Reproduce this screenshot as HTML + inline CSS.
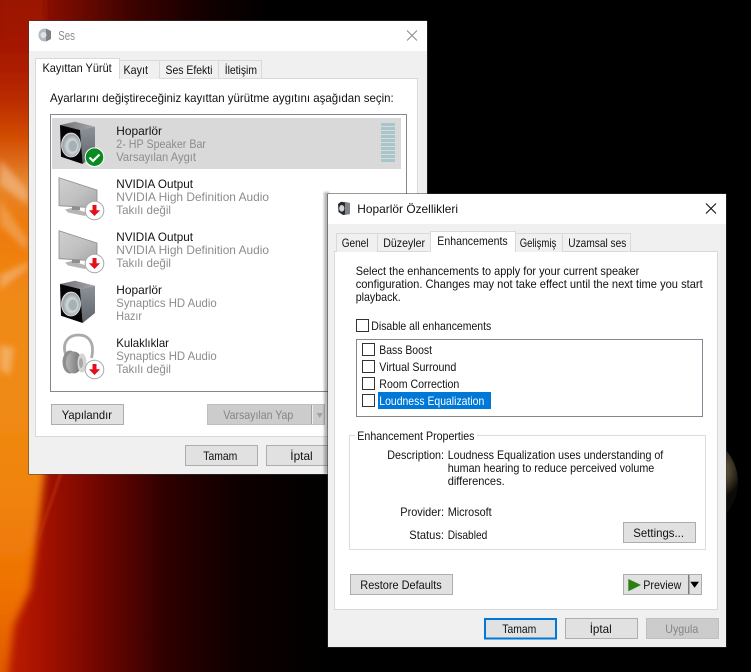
<!DOCTYPE html>
<html><head><meta charset="utf-8"><title>Ses</title>
<style>
html,body{margin:0;padding:0;background:#000;overflow:hidden}
svg{display:block}
text{font-family:"Liberation Sans",sans-serif;font-size:12px;fill:#000;white-space:pre}
.g{fill:#8c8c8c}
.d{fill:#858585}
.t{fill:#111}
</style></head><body>
<svg xmlns="http://www.w3.org/2000/svg" width="751" height="672" viewBox="0 0 751 672">
<defs>
<linearGradient id="bgT" x1="0" y1="0" x2="1" y2="0">
<stop offset="0" stop-color="#a51500"/><stop offset=".12" stop-color="#7a0b00"/><stop offset=".25" stop-color="#3a0200"/><stop offset=".38" stop-color="#120000"/><stop offset=".5" stop-color="#000"/>
</linearGradient>
<linearGradient id="fire" gradientUnits="userSpaceOnUse" x1="0" y1="0" x2="0" y2="672">
<stop offset="0" stop-color="#9a1400"/><stop offset=".09" stop-color="#a81a00"/><stop offset=".15" stop-color="#bb2c00"/><stop offset=".21" stop-color="#d45005"/><stop offset=".27" stop-color="#e6852e"/><stop offset=".34" stop-color="#ee7a08"/><stop offset=".45" stop-color="#f08a18"/><stop offset=".6" stop-color="#f08a15"/><stop offset=".75" stop-color="#f08208"/><stop offset=".89" stop-color="#ee7005"/><stop offset="1" stop-color="#e05a05"/>
</linearGradient>
<linearGradient id="botG" x1="0" y1="0" x2="1" y2="0">
<stop offset="0" stop-color="#c22000"/><stop offset=".12" stop-color="#a81200"/><stop offset=".3" stop-color="#700600"/><stop offset=".5" stop-color="#2e0000"/><stop offset=".72" stop-color="#0e0000"/><stop offset="1" stop-color="#000"/>
</linearGradient>
<radialGradient id="planet" gradientUnits="userSpaceOnUse" cx="712" cy="470" r="30"><stop offset="0" stop-color="#7a6a50"/><stop offset=".5" stop-color="#5c4f3a"/><stop offset="1" stop-color="#0c0a06"/></radialGradient>
<filter id="b6" x="-50%" y="-50%" width="200%" height="200%"><feGaussianBlur stdDeviation="4"/></filter>
<filter id="b3" x="-50%" y="-50%" width="200%" height="200%"><feGaussianBlur stdDeviation="3"/></filter>
<filter id="b1" x="-50%" y="-50%" width="200%" height="200%"><feGaussianBlur stdDeviation="1"/></filter>
<linearGradient id="side" x1="0" y1="0" x2="0" y2="1"><stop offset="0" stop-color="#8d9198"/><stop offset="1" stop-color="#5f636a"/></linearGradient>
<linearGradient id="top" x1="0" y1="0" x2="1" y2="0"><stop offset="0" stop-color="#6f7074"/><stop offset="1" stop-color="#a5a6a9"/></linearGradient>
<radialGradient id="cone" cx=".55" cy=".55" r=".6"><stop offset="0" stop-color="#8c979c"/><stop offset=".45" stop-color="#cfd6da"/><stop offset=".8" stop-color="#99a2a8"/><stop offset="1" stop-color="#e8ecee"/></radialGradient>
<linearGradient id="scr" x1="0" y1="0" x2="1" y2="1"><stop offset="0" stop-color="#d0d0d0"/><stop offset=".55" stop-color="#c0c0c0"/><stop offset="1" stop-color="#a6a6a6"/></linearGradient>
<linearGradient id="cup" x1="0" y1="0" x2="1" y2="0"><stop offset="0" stop-color="#b5b5b5"/><stop offset=".6" stop-color="#8a8a8a"/><stop offset="1" stop-color="#757575"/></linearGradient>
<g id="spk">
<path d="M60 125 75 121.7 95 126.7 80 130Z" fill="url(#top)"/>
<path d="M80 130 95 126.7 95 154 82.7 164Z" fill="url(#side)"/>
<path d="M60 125 80 130 82.7 164 61 156.700Z" fill="#050505"/>
<ellipse cx="71" cy="145" rx="9.500" ry="12" fill="url(#cone)" stroke="#e4e8ea" stroke-width=".8"/>
<ellipse cx="73" cy="146" rx="4" ry="5.500" fill="#a6b0b5"/>
</g>
<g id="mon">
<path d="M65 209.500 72 208 88 213 85 216 68 212.500Z" fill="#b5b5b5"/>
<path d="M72 205h8v5h-8z" fill="#8f8f8f"/>
<path d="M59 177.700 97 190V208L59 205.700Z" fill="url(#scr)" stroke="#8b8b8b" stroke-width=".8"/>
</g>
<g id="red">
<circle cx="94.500" cy="210.500" r="9.300" fill="#fff" stroke="#a8a8a8" stroke-width="1"/>
<path d="M92.500 205h4v5.200h3.600L94.500 216 88.900 210.200h3.600Z" fill="#e2101a"/>
</g>
<g id="hp">
<path d="M65.500 354C62 343 68 335 78.500 335S95 343 91.500 358" fill="none" stroke="#ababab" stroke-width="2.800"/>
<ellipse cx="70" cy="362" rx="7.500" ry="11.500" fill="#8e8e8e"/>
<ellipse cx="74" cy="362.500" rx="8" ry="11" fill="url(#cup)"/>
<ellipse cx="82" cy="363" rx="4.500" ry="9.500" fill="#d4d4d4"/>
<ellipse cx="81" cy="363" rx="2" ry="5" fill="#a8a8a8"/>
</g>
</defs>

<!-- wallpaper -->
<rect width="751" height="672" fill="#000"/>
<rect width="540" height="480" fill="url(#bgT)"/>
<rect x="0" y="470" width="330" height="202" fill="url(#botG)"/>
<path d="M-12-12H45V470L37 540 30 590 14 625 6 690H-12Z" fill="url(#fire)" filter="url(#b6)"/>
<rect x="0" y="0" width="4" height="40" fill="#9a1400" opacity=".5"/>
<g filter="url(#b3)" opacity=".55">
<path d="M0 160 28 190 28 205 0 185Z" fill="#f5c69a"/>
<path d="M0 275 28 262 28 268 0 290Z" fill="#f7c08f"/>
<path d="M0 345 14 348 10 375 0 370Z" fill="#f6c89a"/>
<path d="M0 200 28 240 26 250 0 225Z" fill="#f2b070"/>
</g>
<path d="M62 470 38 540" stroke="#c23a10" stroke-width="3" opacity=".5" filter="url(#b1)"/>
<!-- planet -->
<circle cx="690" cy="482" r="48" fill="url(#planet)"/>

<!-- Window 1 -->
<rect x="28.500" y="20.500" width="399" height="454" fill="#3a3a3a"/>
<rect x="29" y="21" width="398" height="453" fill="#f0f0f0"/>
<rect x="29" y="21" width="398" height="30" fill="#fff"/>
<g opacity=".75">
<ellipse cx="44.500" cy="35" rx="6" ry="6.500" fill="#9ca3a7"/>
<path d="M46 28.500 51 31V39L46 41.500Z" fill="#55585c"/>
<circle cx="43.500" cy="35" r="3" fill="#d8dcde"/>
</g>
<text x="58.300" y="40" class="g" textLength="16.700" lengthAdjust="spacingAndGlyphs" style="font-size:13px">Ses</text>
<path d="M407 30.500 417 40.500M417 30.500 407 40.500" stroke="#8a8a8a" stroke-width="1" fill="none"/>

<rect x="35.500" y="78.500" width="382" height="358" fill="#fff" stroke="#d9d9d9"/>
<path d="M119.500 79V60.500H159.500V79M159.500 60.500H218.500V79M218.500 60.500H261.500V79" fill="#f0f0f0" stroke="#d9d9d9"/>
<path d="M35.500 79V58.500H119.500V79" fill="#fff" stroke="#d9d9d9"/>
<rect x="36" y="77" width="83" height="3" fill="#fff"/>
<text x="42.500" y="72" class="t" textLength="69.200" lengthAdjust="spacingAndGlyphs">Kayıttan Yürüt</text>
<text x="123.500" y="74" class="t" textLength="24.500" lengthAdjust="spacingAndGlyphs">Kayıt</text>
<text x="165.500" y="74" class="t" textLength="47" lengthAdjust="spacingAndGlyphs">Ses Efekti</text>
<text x="224.700" y="74" class="t" textLength="32.300" lengthAdjust="spacingAndGlyphs">İletişim</text>
<text x="50" y="102" class="t" textLength="343.700" lengthAdjust="spacingAndGlyphs">Ayarlarını değiştireceğiniz kayıttan yürütme aygıtını aşağıdan seçin:</text>

<rect x="50.500" y="114.500" width="356" height="277" fill="#fff" stroke="#828790"/>
<rect x="52" y="118" width="349" height="51" fill="#d9d9d9"/>
<g fill="#a9c5cc">
<rect x="381" y="123" width="14" height="3"/><rect x="381" y="127" width="14" height="3"/><rect x="381" y="131" width="14" height="3"/><rect x="381" y="135" width="14" height="3"/><rect x="381" y="139" width="14" height="3"/><rect x="381" y="143" width="14" height="3"/><rect x="381" y="147" width="14" height="3"/><rect x="381" y="151" width="14" height="3"/><rect x="381" y="155" width="14" height="3"/><rect x="381" y="159" width="14" height="3"/>
</g>

<use href="#spk"/>
<circle cx="94.500" cy="157.200" r="9.300" fill="#0a8a22" stroke="#fff" stroke-width="1"/>
<path d="M89.500 157.500 93 161 99.500 154.500" fill="none" stroke="#fff" stroke-width="2.200"/>
<use href="#mon"/><use href="#red"/>
<use href="#mon" y="53"/><use href="#red" y="53"/>
<use href="#spk" y="159"/>
<use href="#hp"/><use href="#red" y="159"/>

<text x="116.300" y="135" class="t" textLength="45.700" lengthAdjust="spacingAndGlyphs">Hoparlör</text>
<text x="116.300" y="148" class="g" textLength="89.700" lengthAdjust="spacingAndGlyphs">2- HP Speaker Bar</text>
<text x="116.300" y="161" class="g" textLength="79.700" lengthAdjust="spacingAndGlyphs">Varsayılan Aygıt</text>
<text x="116.300" y="188" class="t" textLength="76.700" lengthAdjust="spacingAndGlyphs">NVIDIA Output</text>
<text x="116.300" y="201" class="g" textLength="152.700" lengthAdjust="spacingAndGlyphs">NVIDIA High Definition Audio</text>
<text x="116.300" y="214" class="g" textLength="54.700" lengthAdjust="spacingAndGlyphs">Takılı değil</text>
<text x="116.300" y="241" class="t" textLength="76.700" lengthAdjust="spacingAndGlyphs">NVIDIA Output</text>
<text x="116.300" y="254" class="g" textLength="152.700" lengthAdjust="spacingAndGlyphs">NVIDIA High Definition Audio</text>
<text x="116.300" y="267" class="g" textLength="54.700" lengthAdjust="spacingAndGlyphs">Takılı değil</text>
<text x="116.300" y="294" class="t" textLength="45.700" lengthAdjust="spacingAndGlyphs">Hoparlör</text>
<text x="116.300" y="307" class="g" textLength="100.400" lengthAdjust="spacingAndGlyphs">Synaptics HD Audio</text>
<text x="116.300" y="320" class="g" textLength="25.700" lengthAdjust="spacingAndGlyphs">Hazır</text>
<text x="116.300" y="347" class="t" textLength="52.700" lengthAdjust="spacingAndGlyphs">Kulaklıklar</text>
<text x="116.300" y="360" class="g" textLength="100.400" lengthAdjust="spacingAndGlyphs">Synaptics HD Audio</text>
<text x="116.300" y="373" class="g" textLength="54.700" lengthAdjust="spacingAndGlyphs">Takılı değil</text>

<rect x="51.500" y="404.500" width="72" height="20" fill="#e1e1e1" stroke="#adadad"/>
<text x="61.700" y="419" class="t" textLength="50.300" lengthAdjust="spacingAndGlyphs">Yapılandır</text>
<rect x="207.500" y="404.500" width="117" height="20" fill="#cccccc" stroke="#bfbfbf"/>
<text x="223.300" y="419" class="d" textLength="70" lengthAdjust="spacingAndGlyphs">Varsayılan Yap</text>
<rect x="311" y="405" width="1" height="19" fill="#a0a0a0"/>
<rect x="312" y="405" width="1" height="19" fill="#eee"/>
<path d="M316.700 413H322.700L319.700 418Z" fill="#a0a0a0"/>

<rect x="185.500" y="445.500" width="72" height="20" fill="#e1e1e1" stroke="#adadad"/>
<text x="203.300" y="460" class="t" textLength="34" lengthAdjust="spacingAndGlyphs">Tamam</text>
<rect x="266.500" y="445.500" width="72" height="20" fill="#e1e1e1" stroke="#adadad"/>
<text x="290.300" y="460" class="t" textLength="22.400" lengthAdjust="spacingAndGlyphs">İptal</text>

<!-- Window 2 shadow -->
<rect x="324" y="192" width="5" height="282" fill="#000" opacity=".28" filter="url(#b1)"/>
<!-- Window 2 -->
<rect x="327.500" y="193.500" width="399" height="454" fill="#333"/>
<rect x="328" y="194" width="398" height="453" fill="#f0f0f0"/>
<rect x="328" y="194" width="398" height="30" fill="#fff"/>
<path d="M338 204 341 201.800 350 203V214L343 215 338.500 212Z" fill="#2a2a2a"/>
<path d="M345 203H350V214L345 215Z" fill="#808388"/>
<ellipse cx="341.800" cy="208.300" rx="2.600" ry="3.300" fill="#cfd5d8"/>
<text x="357.300" y="213" class="t" textLength="100.700" lengthAdjust="spacingAndGlyphs">Hoparlör Özellikleri</text>
<path d="M706 203.500 716 213.500M716 203.500 706 213.500" stroke="#111" stroke-width="1.100" fill="none"/>

<rect x="334.500" y="251.500" width="383" height="358" fill="#fff" stroke="#d9d9d9"/>
<path d="M336.500 252V233.500H377.500V252M377.500 233.500H430.500V252M515.500 252V233.500H562.500V252M562.500 233.500H630.500V252" fill="#f0f0f0" stroke="#d9d9d9"/>
<path d="M430.500 252V231.500H515.500V252" fill="#fff" stroke="#d9d9d9"/>
<rect x="431" y="250" width="84" height="3" fill="#fff"/>
<text x="341.700" y="247" class="t" textLength="26.800" lengthAdjust="spacingAndGlyphs">Genel</text>
<text x="383.300" y="247" class="t" textLength="41.700" lengthAdjust="spacingAndGlyphs">Düzeyler</text>
<text x="437.300" y="245" class="t" textLength="70.400" lengthAdjust="spacingAndGlyphs">Enhancements</text>
<text x="519.700" y="247" class="t" textLength="36.600" lengthAdjust="spacingAndGlyphs">Gelişmiş</text>
<text x="568.300" y="247" class="t" textLength="58" lengthAdjust="spacingAndGlyphs">Uzamsal ses</text>

<text x="355.700" y="275" class="t" textLength="283.600" lengthAdjust="spacingAndGlyphs">Select the enhancements to apply for your current speaker</text>
<text x="355.700" y="288" class="t" textLength="347" lengthAdjust="spacingAndGlyphs">configuration. Changes may not take effect until the next time you start</text>
<text x="355.700" y="301" class="t" textLength="45" lengthAdjust="spacingAndGlyphs">playback.</text>

<rect x="356.500" y="319.500" width="12" height="12" fill="#fff" stroke="#333"/>
<text x="371.300" y="330" class="t" textLength="120" lengthAdjust="spacingAndGlyphs">Disable all enhancements</text>

<rect x="356.500" y="339.500" width="346" height="77" fill="#fff" stroke="#828790"/>
<rect x="362.500" y="343.500" width="12" height="12" fill="#fff" stroke="#333"/>
<rect x="362.500" y="360.500" width="12" height="12" fill="#fff" stroke="#333"/>
<rect x="362.500" y="377.500" width="12" height="12" fill="#fff" stroke="#333"/>
<rect x="362.500" y="394.500" width="12" height="12" fill="#fff" stroke="#333"/>
<text x="379.300" y="354" class="t" textLength="52.700" lengthAdjust="spacingAndGlyphs">Bass Boost</text>
<text x="379.300" y="371" class="t" textLength="77" lengthAdjust="spacingAndGlyphs">Virtual Surround</text>
<text x="379.300" y="388" class="t" textLength="80" lengthAdjust="spacingAndGlyphs">Room Correction</text>
<rect x="378" y="392" width="113" height="17" fill="#0078d7"/>
<text x="379.300" y="405" style="fill:#fff" textLength="105" lengthAdjust="spacingAndGlyphs">Loudness Equalization</text>

<rect x="349.500" y="435.500" width="356" height="114" fill="#fff" stroke="#dcdcdc"/>
<rect x="355" y="434" width="122" height="3" fill="#fff"/>
<text x="357.300" y="440" class="t" textLength="117.200" lengthAdjust="spacingAndGlyphs">Enhancement Properties</text>
<text x="387.300" y="459" class="t" textLength="56.700" lengthAdjust="spacingAndGlyphs">Description:</text>
<text x="447.700" y="459" class="t" textLength="215.600" lengthAdjust="spacingAndGlyphs">Loudness Equalization uses understanding of</text>
<text x="447.700" y="472" class="t" textLength="206.600" lengthAdjust="spacingAndGlyphs">human hearing to reduce perceived volume</text>
<text x="447.700" y="485" class="t" textLength="57" lengthAdjust="spacingAndGlyphs">differences.</text>
<text x="400.300" y="516" class="t" textLength="43.700" lengthAdjust="spacingAndGlyphs">Provider:</text>
<text x="447.700" y="516" class="t" textLength="44" lengthAdjust="spacingAndGlyphs">Microsoft</text>
<text x="409.300" y="539" class="t" textLength="34.700" lengthAdjust="spacingAndGlyphs">Status:</text>
<text x="447.700" y="539" class="t" textLength="39.600" lengthAdjust="spacingAndGlyphs">Disabled</text>
<rect x="623.500" y="522.500" width="72" height="20" fill="#e1e1e1" stroke="#adadad"/>
<text x="633.300" y="537" class="t" textLength="50.700" lengthAdjust="spacingAndGlyphs">Settings...</text>

<rect x="350.500" y="574.500" width="102" height="20" fill="#e1e1e1" stroke="#adadad"/>
<text x="360.300" y="589" class="t" textLength="81.400" lengthAdjust="spacingAndGlyphs">Restore Defaults</text>
<rect x="623.500" y="574.500" width="78" height="20" fill="#e1e1e1" stroke="#adadad"/>
<path d="M628.300 579 641 585 628.300 591.300Z" fill="#2c7f12"/>
<text x="643.300" y="589" class="t" textLength="38" lengthAdjust="spacingAndGlyphs">Preview</text>
<rect x="688" y="575" width="1.500" height="19" fill="#7c7c7c"/>
<path d="M690.300 581.700H699L694.600 587.700Z" fill="#000"/>

<rect x="485" y="619" width="71" height="19.500" fill="#e1e1e1" stroke="#0078d7" stroke-width="2"/>
<text x="502.300" y="633" class="t" textLength="34" lengthAdjust="spacingAndGlyphs">Tamam</text>
<rect x="565.500" y="618.500" width="72" height="20" fill="#e1e1e1" stroke="#adadad"/>
<text x="589.700" y="633" class="t" textLength="22" lengthAdjust="spacingAndGlyphs">İptal</text>
<rect x="646.500" y="618.500" width="72" height="20" fill="#cccccc" stroke="#bfbfbf"/>
<text x="665.300" y="633" class="d" textLength="33" lengthAdjust="spacingAndGlyphs">Uygula</text>
</svg>
</body></html>
